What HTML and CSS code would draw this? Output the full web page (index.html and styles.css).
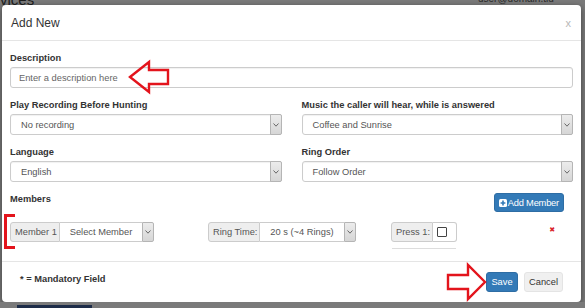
FILE: index.html
```html
<!DOCTYPE html>
<html lang="en">
<head>
    <meta charset="UTF-8">
    <meta name="viewport" content="width=device-width, initial-scale=1.0">
    <title>Add New</title>
    <link rel="stylesheet" href="styles.css">
</head>
<body>
    <div class="page-bg">
        <span class="bg-title">vices</span>
        <span class="bg-user">user@domain.tld</span>
        <span class="bg-bar"></span>
    </div>

    <div class="modal">
        <div class="modal-header">
            <h4>Add New</h4>
            <span class="close">x</span>
        </div>

        <div class="modal-body">
            <div class="form-group">
                <label>Description</label>
                <div class="form-control placeholder">Enter a description here</div>
            </div>

            <div class="row">
                <div class="form-group">
                    <label>Play Recording Before Hunting</label>
                    <div class="form-control select">
                        <span class="value">No recording</span>
                        <span class="caret"><svg width="6" height="4" viewBox="0 0 6 4"><polyline points="0.5,0.5 3,3.2 5.5,0.5" fill="none" stroke="#666" stroke-width="1"/></svg></span>
                    </div>
                </div>
                <div class="form-group">
                    <label>Music the caller will hear, while is answered</label>
                    <div class="form-control select">
                        <span class="value">Coffee and Sunrise</span>
                        <span class="caret"><svg width="6" height="4" viewBox="0 0 6 4"><polyline points="0.5,0.5 3,3.2 5.5,0.5" fill="none" stroke="#666" stroke-width="1"/></svg></span>
                    </div>
                </div>
                <div class="form-group">
                    <label>Language</label>
                    <div class="form-control select">
                        <span class="value">English</span>
                        <span class="caret"><svg width="6" height="4" viewBox="0 0 6 4"><polyline points="0.5,0.5 3,3.2 5.5,0.5" fill="none" stroke="#666" stroke-width="1"/></svg></span>
                    </div>
                </div>
                <div class="form-group">
                    <label>Ring Order</label>
                    <div class="form-control select">
                        <span class="value">Follow Order</span>
                        <span class="caret"><svg width="6" height="4" viewBox="0 0 6 4"><polyline points="0.5,0.5 3,3.2 5.5,0.5" fill="none" stroke="#666" stroke-width="1"/></svg></span>
                    </div>
                </div>
            </div>

            <div class="members-head">
                <label>Members</label>
                <button class="btn btn-primary add-member">
                    <svg class="plus" width="8" height="8" viewBox="0 0 8 8"><rect width="8" height="8" rx="1.5" fill="#fff"/><path d="M4 1.6v4.8M1.6 4h4.8" stroke="#337ab7" stroke-width="1.6"/></svg>
                    <span>Add Member</span>
                </button>
            </div>

            <div class="member-row">
                <div class="input-group member">
                    <span class="addon">Member 1</span>
                    <span class="field">Select Member</span>
                    <span class="caret"><svg width="6" height="4" viewBox="0 0 6 4"><polyline points="0.5,0.5 3,3.2 5.5,0.5" fill="none" stroke="#666" stroke-width="1"/></svg></span>
                </div>
                <div class="input-group ring">
                    <span class="addon">Ring Time:</span>
                    <span class="field">20 s (~4 Rings)</span>
                    <span class="caret"><svg width="6" height="4" viewBox="0 0 6 4"><polyline points="0.5,0.5 3,3.2 5.5,0.5" fill="none" stroke="#666" stroke-width="1"/></svg></span>
                </div>
                <div class="press">
                    <div class="input-group">
                        <span class="addon">Press 1:</span>
                        <span class="check-box"><span class="checkbox"></span></span>
                    </div>
                    <div class="press-line"></div>
                </div>
                <span class="remove">&#10006;</span>
            </div>
        </div>

        <div class="modal-footer">
            <span class="mandatory">* = Mandatory Field</span>
            <div class="actions">
                <button class="btn btn-primary save">Save</button>
                <button class="btn btn-default cancel">Cancel</button>
            </div>
        </div>
    </div>

    <svg class="marks" width="585" height="308" viewBox="0 0 585 308">
        <path d="M130 77 L149 62 L149 70 L168 70 L168 84 L149 84 L149 92 Z" fill="none" stroke="#e3141c" stroke-width="2.4" stroke-linejoin="miter"/>
        <path d="M15 215.5 L5.5 215.5 L5.5 247.5 L15 247.5" fill="none" stroke="#e3141c" stroke-width="3"/>
        <path d="M485 282 L468 265 L468 275 L448 275 L448 289 L468 289 L468 299 Z" fill="none" stroke="#e3141c" stroke-width="2.4" stroke-linejoin="miter"/>
    </svg>
</body>
</html>
```

FILE: styles.css
```css
body {
    margin: 0;
    font-family: "Liberation Sans", Arial, sans-serif;
    font-size: 9.3px;
    color: #333;
    background-color: #7a7a7a;
    overflow: hidden;
    white-space: nowrap;
}

.page-bg {
    position: absolute;
    top: 0;
    left: 0;
    width: 585px;
    height: 308px;
}

.bg-title {
    position: absolute;
    top: -9px;
    left: 0;
    font-size: 15px;
    color: #1e1e1e;
}

.bg-user {
    position: absolute;
    top: -7px;
    left: 478px;
    font-size: 10px;
    color: #2a2a2a;
}

.bg-bar {
    position: absolute;
    left: 17px;
    bottom: 0;
    width: 75px;
    height: 3px;
    background-color: #1d2c48;
}

.modal {
    position: relative;
    margin: 5px 0 0 2px;
    width: 579px;
    background-color: #fff;
    border-radius: 4px;
    box-shadow: 0 2px 6px rgba(0, 0, 0, 0.5);
}

.modal-header {
    display: flex;
    justify-content: space-between;
    align-items: center;
    height: 35px;
    padding: 0 9px;
    border-bottom: 1px solid #e5e5e5;
}

.modal-header h4 {
    margin: 0;
    font-size: 12px;
    font-weight: normal;
    color: #333;
}

.close {
    font-size: 11px;
    color: #b8b8b8;
    margin-right: 1px;
}

.modal-body {
    padding: 11px 8px 12px 8px;
}

label {
    display: block;
    font-weight: bold;
    line-height: 13px;
    margin-bottom: 2px;
}

.form-group {
    margin-bottom: 11px;
}

.row {
    display: grid;
    grid-template-columns: 1fr 1fr;
    column-gap: 20px;
}

.form-control {
    box-sizing: border-box;
    height: 21px;
    border: 1px solid #ccc;
    border-radius: 3px;
    background-color: #fff;
    color: #555;
    display: flex;
    align-items: center;
    box-shadow: inset 0 1px 1px rgba(0, 0, 0, 0.06);
}

.placeholder {
    padding: 0 8px;
    color: #666;
}

.select .value {
    flex: 1;
    padding-left: 10px;
}

.caret {
    box-sizing: border-box;
    display: flex;
    align-items: center;
    justify-content: center;
    width: 12px;
    height: 100%;
    border: 1px solid #b5b5b5;
    border-radius: 0 2px 2px 0;
    background: linear-gradient(to bottom, #ececec, #d6d6d6);
}

.select .caret {
    height: calc(100% + 2px);
    margin-right: -1px;
}

.members-head {
    display: flex;
    justify-content: space-between;
    align-items: flex-start;
    padding-right: 9px;
}

.btn {
    font-family: "Liberation Sans", Arial, sans-serif;
    font-size: 9.3px;
    height: 19px;
    padding: 0 5px;
    border-radius: 3px;
    border: 1px solid transparent;
    cursor: pointer;
    white-space: nowrap;
}

.btn-primary {
    background-color: #337ab7;
    border-color: #2e6da4;
    color: #fff;
}

.btn-default {
    background-color: #f0f0f0;
    border-color: #e4e4e4;
    color: #333;
}

.add-member {
    display: flex;
    align-items: center;
    gap: 1px;
    padding: 0 4px;
    letter-spacing: -0.2px;
}

.add-member .plus {
    flex-shrink: 0;
    display: block;
}

.member-row {
    display: grid;
    grid-template-columns: 198px 183px 1fr auto;
    align-items: start;
    margin-top: 10px;
}

.input-group {
    display: flex;
    height: 20px;
    color: #555;
}

.input-group .addon {
    box-sizing: border-box;
    display: flex;
    align-items: center;
    padding: 0 4px;
    background-color: #eee;
    border: 1px solid #ccc;
    border-radius: 3px 0 0 3px;
}

.input-group .field {
    box-sizing: border-box;
    display: flex;
    align-items: center;
    justify-content: center;
    border: 1px solid #ccc;
    border-left: none;
    border-right: none;
    background-color: #fff;
}

.member .addon {
    width: 50px;
}

.member .field {
    width: 82px;
}

.ring .addon {
    width: 52px;
}

.ring .field {
    width: 84px;
}

.press .addon {
    width: 42px;
}

.check-box {
    box-sizing: border-box;
    display: flex;
    align-items: center;
    padding-left: 4px;
    width: 24px;
    border: 1px solid #ccc;
    border-left: none;
    border-radius: 0 3px 3px 0;
}

.checkbox {
    box-sizing: border-box;
    width: 10px;
    height: 10px;
    border: 1px solid #444;
    border-radius: 1px;
}

.press-line {
    width: 64px;
    margin: 6px 0 0 1px;
    border-top: 1px solid #ddd;
}

.remove {
    margin: 4px 18px 0 0;
    font-family: "DejaVu Sans", sans-serif;
    font-size: 7px;
    color: #d9262b;
}

.modal-footer {
    display: flex;
    justify-content: space-between;
    align-items: flex-start;
    padding: 10px 18px 10px 18px;
    border-top: 1px solid #e5e5e5;
}

.mandatory {
    font-weight: bold;
    line-height: 13px;
    margin-top: 1px;
}

.actions {
    display: flex;
    gap: 6px;
}

.actions .btn {
    height: 20px;
    padding: 0;
}

.save {
    width: 32px;
}

.cancel {
    width: 39px;
}

.marks {
    position: absolute;
    top: 0;
    left: 0;
    pointer-events: none;
}
```
